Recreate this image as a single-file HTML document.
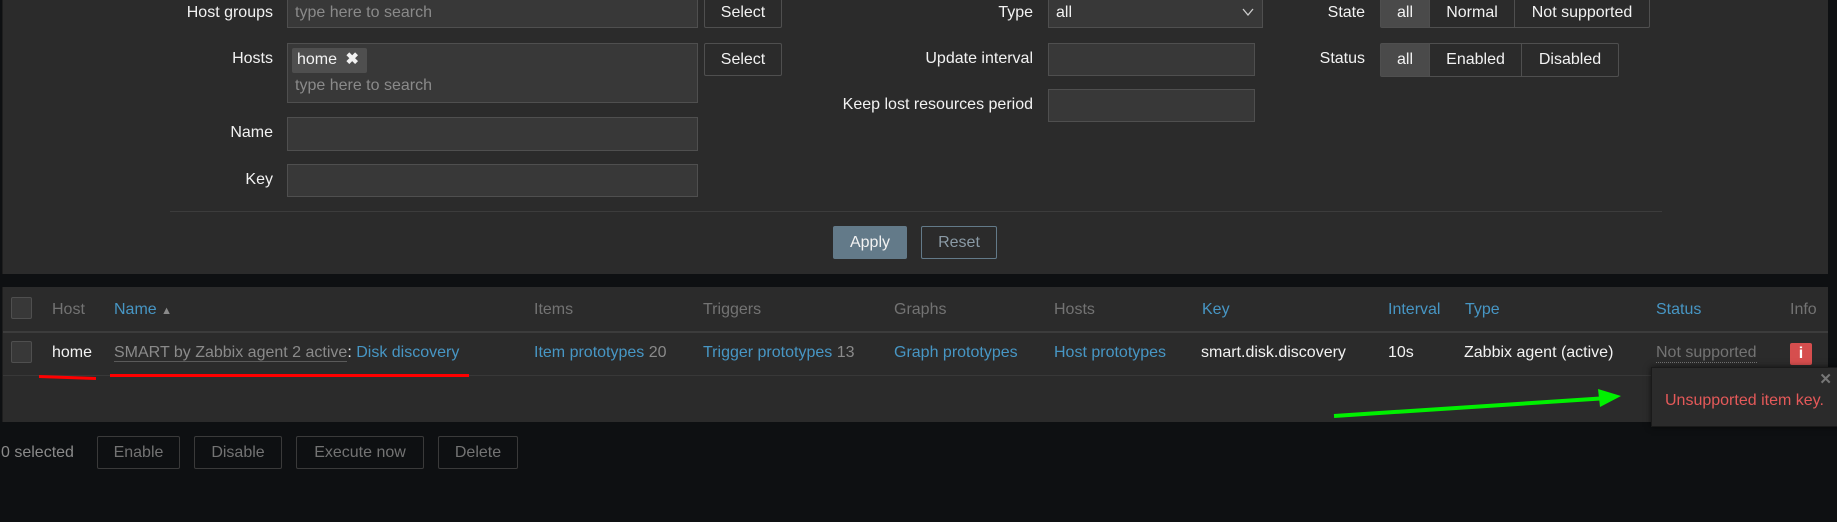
<!DOCTYPE html>
<html><head><meta charset="utf-8"><style>
*{box-sizing:border-box;margin:0;padding:0}
body{width:1837px;height:522px;background:#0e1012;font-family:"Liberation Sans",sans-serif;font-size:16px;color:#f2f2f2;position:relative;overflow:hidden}
.a{position:absolute}
.panel{background:#2b2b2b}
.lbl{position:absolute;text-align:right;line-height:28px;white-space:nowrap}
.inp{position:absolute;background:#383838;border:1px solid #4f4f4f}
.ph{color:#8a8a8a;padding-left:7px;line-height:26px}
.btn{position:absolute;border:1px solid #4f4f4f;background:#2b2b2b;color:#f2f2f2;text-align:center;border-radius:2px}
.seg{position:absolute;display:flex;border:1px solid #4f4f4f;border-radius:2px;background:#2b2b2b}
.seg div{border-left:1px solid #4f4f4f;text-align:center;line-height:inherit}
.seg div:first-child{border-left:0;background:#4a4a4a}
.th{position:absolute;top:300px;color:#737373;line-height:20px}
.blue{color:#4796c4}
.td{position:absolute;top:343px;line-height:20px;white-space:nowrap}
.bb{position:absolute;top:436px;height:33px;line-height:31px;border:1px solid #3a3a3a;color:#737373;text-align:center;border-radius:2px}
</style></head><body>
<div class="a panel" style="left:2px;top:0;width:1826px;height:274px;border-left:1px solid #1e1e1e"></div>

<div class="lbl" style="left:150px;width:123px;top:-1px">Host groups</div>
<div class="inp" style="left:287px;top:-2px;width:411px;height:30px"><div class="ph" style="line-height:28px">type here to search</div></div>
<div class="btn" style="left:704px;top:-2px;width:78px;height:30px;line-height:28px">Select</div>

<div class="lbl" style="left:150px;width:123px;top:45px">Hosts</div>
<div class="inp" style="left:287px;top:43px;width:411px;height:60px">
 <div class="a" style="left:4px;top:4px;width:75px;height:25px;background:#4f4f4f;border-radius:2px;line-height:24px;padding-left:5px">home <span style="font-weight:bold;margin-left:4px">✖</span></div>
 <div class="ph a" style="left:0;top:29px">type here to search</div>
</div>
<div class="btn" style="left:704px;top:43px;width:78px;height:33px;line-height:31px">Select</div>

<div class="lbl" style="left:150px;width:123px;top:119px">Name</div>
<div class="inp" style="left:287px;top:117px;width:411px;height:34px"></div>
<div class="lbl" style="left:150px;width:123px;top:166px">Key</div>
<div class="inp" style="left:287px;top:164px;width:411px;height:33px"></div>

<div class="lbl" style="left:900px;width:133px;top:-1px">Type</div>
<div class="inp" style="left:1048px;top:-2px;width:215px;height:30px"><div style="padding-left:7px;line-height:28px">all</div>
 <svg class="a" style="right:8px;top:9px" width="12" height="8"><path d="M1 1L6 7L11 1" stroke="#ccc" fill="none" stroke-width="1.3"/></svg></div>
<div class="lbl" style="left:780px;width:253px;top:45px">Update interval</div>
<div class="inp" style="left:1048px;top:43px;width:207px;height:33px"></div>
<div class="lbl" style="left:780px;width:253px;top:91px">Keep lost resources period</div>
<div class="inp" style="left:1048px;top:89px;width:207px;height:33px"></div>

<div class="lbl" style="left:1280px;width:85px;top:-1px">State</div>
<div class="seg" style="left:1380px;top:-2px;height:30px;line-height:28px"><div style="width:48px">all</div><div style="width:85px">Normal</div><div style="width:135px">Not supported</div></div>
<div class="lbl" style="left:1280px;width:85px;top:45px">Status</div>
<div class="seg" style="left:1380px;top:43px;height:34px;line-height:32px"><div style="width:48px">all</div><div style="width:92px">Enabled</div><div style="width:97px">Disabled</div></div>

<div class="a" style="left:170px;top:211px;width:1492px;height:1px;background:#3c3c3c"></div>
<div class="a" style="left:833px;top:226px;width:74px;height:33px;background:#637a89;border-radius:2px;text-align:center;line-height:33px">Apply</div>
<div class="a" style="left:921px;top:226px;width:76px;height:33px;border:1px solid #637a89;border-radius:2px;text-align:center;line-height:31px;color:#8a9aa5">Reset</div>

<div class="a panel" style="left:2px;top:287px;width:1826px;height:135px;border-left:1px solid #1e1e1e"></div>
<div class="a" style="left:3px;top:331px;width:1825px;height:2px;background:#3c3c3c"></div>
<div class="a" style="left:3px;top:375px;width:1825px;height:1px;background:#383838"></div>
<div class="a" style="left:11px;top:297px;width:21px;height:22px;border:1px solid #4f4f4f;background:#383838;border-radius:2px"></div>
<div class="th" style="left:52px">Host</div>
<div class="th blue" style="left:114px">Name <span style="font-size:11px;color:#8a8a8a">▲</span></div>
<div class="th" style="left:534px">Items</div>
<div class="th" style="left:703px">Triggers</div>
<div class="th" style="left:894px">Graphs</div>
<div class="th" style="left:1054px">Hosts</div>
<div class="th blue" style="left:1202px">Key</div>
<div class="th blue" style="left:1388px">Interval</div>
<div class="th blue" style="left:1465px">Type</div>
<div class="th blue" style="left:1656px">Status</div>
<div class="th" style="left:1790px">Info</div>

<div class="a" style="left:11px;top:341px;width:21px;height:22px;border:1px solid #4f4f4f;background:#383838;border-radius:2px"></div>
<div class="td" style="left:52px">home</div>
<div class="td" style="left:114px"><span style="color:#8a8a8a;border-bottom:1px solid #5a5a5a">SMART by Zabbix agent 2 active</span>: <span class="blue">Disk discovery</span></div>
<div class="td blue" style="left:534px">Item prototypes <span style="color:#8a8a8a">20</span></div>
<div class="td blue" style="left:703px">Trigger prototypes <span style="color:#8a8a8a">13</span></div>
<div class="td blue" style="left:894px">Graph prototypes</div>
<div class="td blue" style="left:1054px">Host prototypes</div>
<div class="td" style="left:1201px">smart.disk.discovery</div>
<div class="td" style="left:1388px">10s</div>
<div class="td" style="left:1464px">Zabbix agent (active)</div>
<div class="td" style="left:1656px;color:#737373;border-bottom:1px dotted #737373;line-height:19px">Not supported</div>
<div class="a" style="left:1790px;top:343px;width:22px;height:22px;background:#d64e4e;border-radius:2px;color:#fff;text-align:center;font-weight:bold;line-height:22px">i</div>

<div class="a" style="left:39px;top:376px;width:57px;height:3px;background:#f00;transform:rotate(2deg)"></div>
<div class="a" style="left:110px;top:374px;width:359px;height:3px;background:#f00"></div>

<svg class="a" style="left:1330px;top:385px" width="300" height="40"><path d="M4 31L278 13" stroke="#00f000" stroke-width="4"/><path d="M268 4L291 11L270 22Z" fill="#00f000"/></svg>

<div class="a" style="left:1651px;top:367px;width:190px;height:60px;background:#2b2b2b;border:1px solid #1a1a1a;box-shadow:0 0 6px rgba(0,0,0,.6)">
 <div class="a" style="right:8px;top:2px;color:#777;font-size:15px;font-weight:bold">✕</div>
 <div class="a" style="left:13px;top:24px;color:#e45959;white-space:nowrap">Unsupported item key.</div>
</div>

<div class="a" style="left:1px;top:443px;color:#8a8a8a;line-height:20px">0 selected</div>
<div class="bb" style="left:97px;width:83px">Enable</div>
<div class="bb" style="left:194px;width:88px">Disable</div>
<div class="bb" style="left:296px;width:128px">Execute now</div>
<div class="bb" style="left:438px;width:80px">Delete</div>
</body></html>
